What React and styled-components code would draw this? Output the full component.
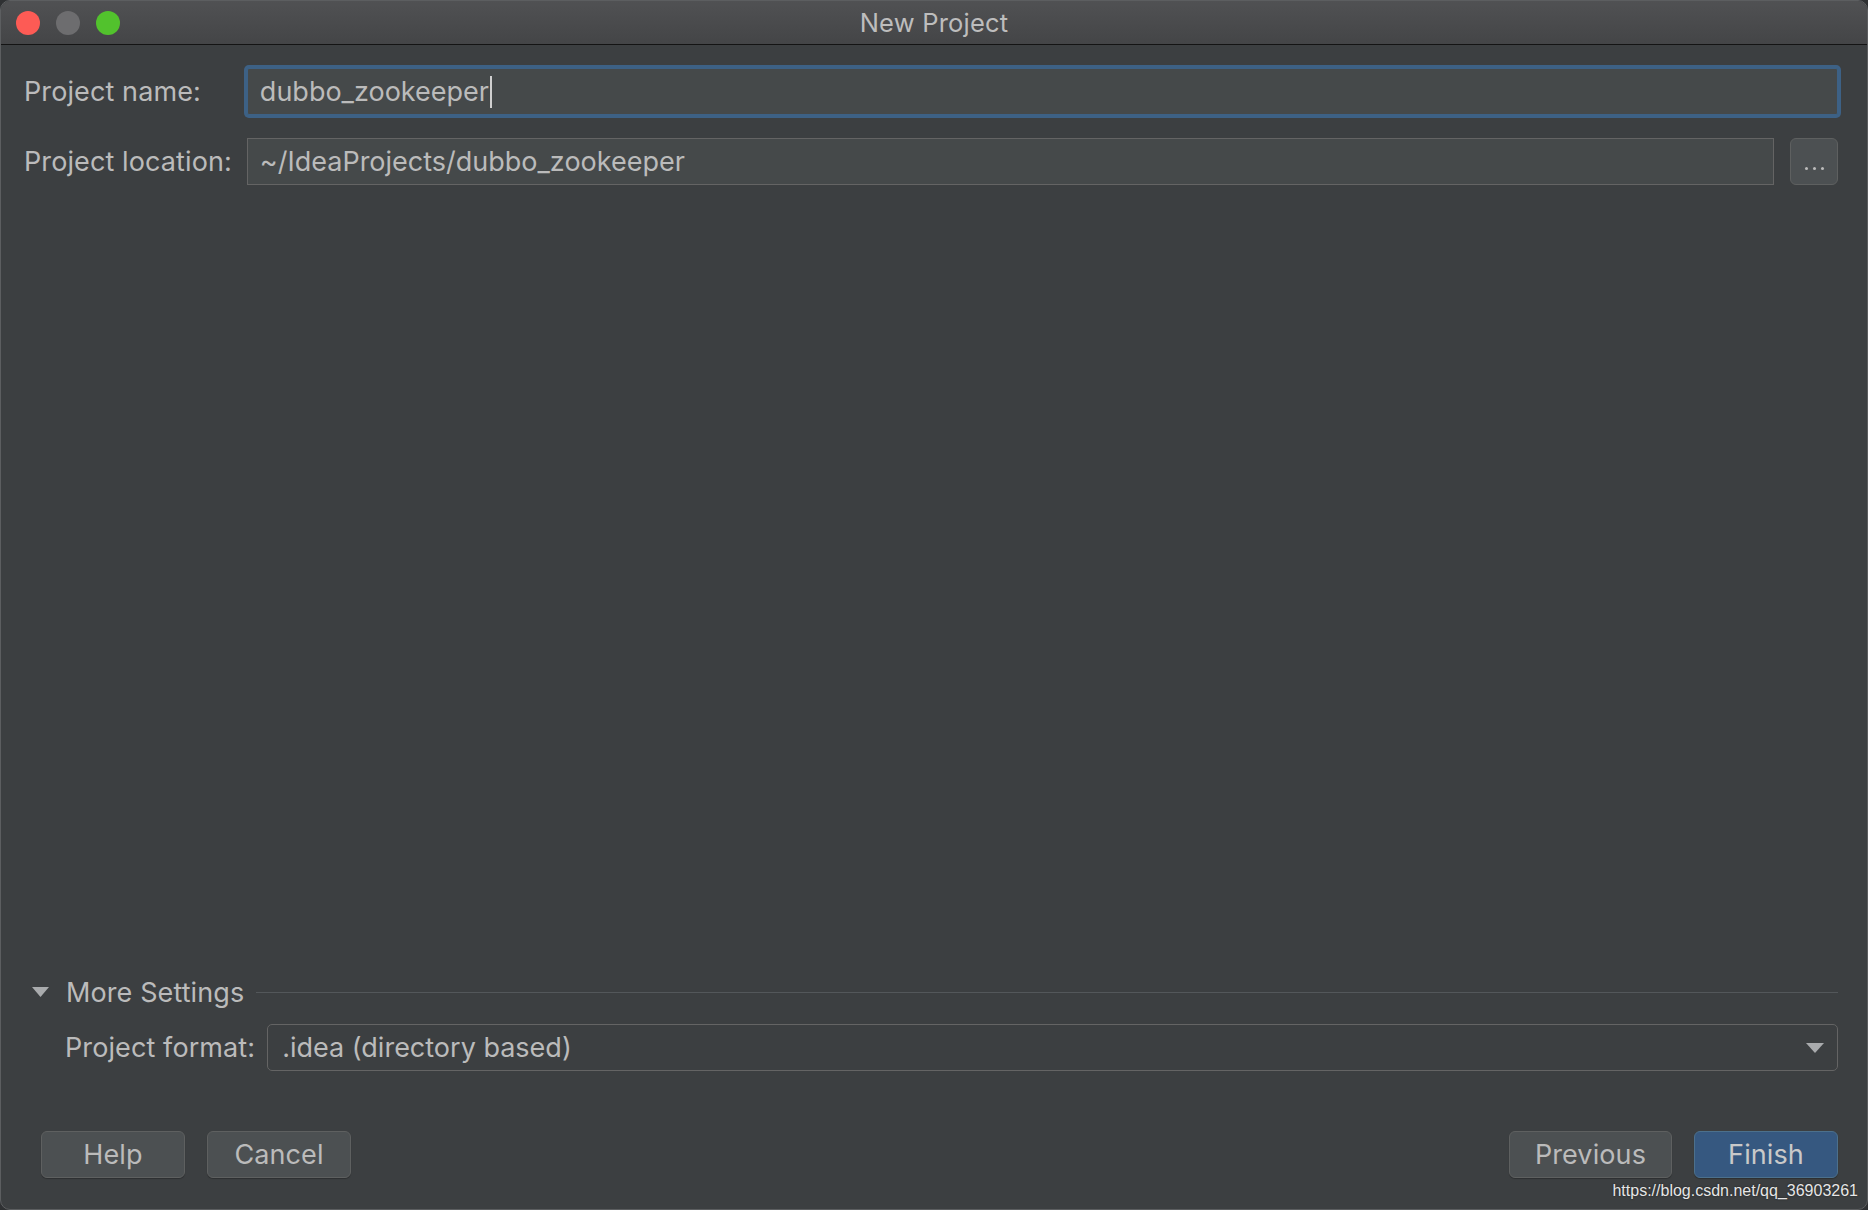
import React from "react";
import styled, { createGlobalStyle } from "styled-components";

const Global = createGlobalStyle`
  html, body { margin: 0; padding: 0; background: #2f3133; }
  body { font-family: Inter, "Noto Sans", sans-serif; }
  * { box-sizing: border-box; }
`;

const Window = styled.div`
  position: relative;
  width: 1868px;
  height: 1210px;
  display: flex;
  flex-direction: column;
  background: #3c3f41;
  border: 1px solid #5c5e60;
  border-radius: 10px;
  overflow: hidden;
  color: #bbbbbb;
`;

const TitleBar = styled.div`
  height: 44px;
  flex: none;
  display: grid;
  grid-template-columns: 1fr auto 1fr;
  align-items: center;
  background: linear-gradient(#505153, #444547);
  border-bottom: 1px solid #141414;
`;

const Lights = styled.div`
  display: flex;
  gap: 16px;
  padding-left: 15px;
`;

const Light = styled.span`
  width: 24px;
  height: 24px;
  border-radius: 50%;
  background: ${(p) => p.$color};
`;

const Title = styled.div`
  font-size: 25.5px;
  color: #bdbdbd;
  letter-spacing: 0.2px;
`;

const Body = styled.div`
  flex: 1;
  display: flex;
  flex-direction: column;
  padding: 23px 29px 31px 23px;
`;

const Form = styled.div`
  display: grid;
  grid-template-columns: auto 1fr;
  column-gap: 15px;
  row-gap: 23px;
  align-items: center;
`;

const Label = styled.div`
  font-size: 27px;
  letter-spacing: 0.1px;
  white-space: nowrap;
  color: #bbbbbb;
`;

const Field = styled.div`
  height: 47px;
  display: flex;
  align-items: center;
  padding-left: 12px;
  background: #45494a;
  font-size: 27px;
  color: #bbbbbb;
  border: 1px solid ${(p) => (p.$focused ? "#3d6185" : "#646464")};
  box-shadow: ${(p) => (p.$focused ? "0 0 0 3px #3d6185" : "none")};
  border-radius: ${(p) => (p.$focused ? "2px" : "0")};
  flex: 1;
  min-width: 0;
`;

const Caret = styled.span`
  display: inline-block;
  width: 2px;
  height: 32px;
  margin-left: 1px;
  background: #cfcfcf;
`;

const LocationRow = styled.div`
  display: flex;
  gap: 16px;
  align-items: center;
`;

const BrowseButton = styled.div`
  width: 48px;
  height: 47px;
  flex: none;
  display: flex;
  align-items: flex-end;
  justify-content: center;
  gap: 5px;
  padding-bottom: 14px;
  background: #4c5052;
  border: 1px solid #5e6060;
  border-radius: 6px;
`;

const Dot = styled.span`
  width: 3px;
  height: 3px;
  border-radius: 50%;
  background: #bbbbbb;
`;

const Spacer = styled.div`
  flex: 1;
`;

const SectionHeader = styled.div`
  height: 30px;
  display: flex;
  align-items: center;
  padding-left: 8px;
`;

const SectionTitle = styled.span`
  font-size: 27px;
  letter-spacing: 0.1px;
  color: #bbbbbb;
  margin-left: 17px;
  margin-right: 12px;
  white-space: nowrap;
`;

const Rule = styled.div`
  flex: 1;
  height: 1px;
  background: #53575a;
`;

const FormatRow = styled.div`
  margin-top: 17px;
  display: flex;
  align-items: center;
  gap: 12px;
  padding-left: 41px;
`;

const Combo = styled.div`
  flex: 1;
  height: 47px;
  display: flex;
  align-items: center;
  justify-content: space-between;
  padding: 0 13px 0 14px;
  border: 1px solid #646464;
  border-radius: 5px;
  background: #3c3f41;
  font-size: 27px;
  color: #bbbbbb;
`;

const ButtonRow = styled.div`
  margin-top: 60px;
  display: flex;
  justify-content: space-between;
  padding-left: 17px;
`;

const Group = styled.div`
  display: flex;
  gap: 22px;
`;

const Button = styled.div`
  height: 47px;
  min-width: 144px;
  padding: 0 25px;
  display: flex;
  align-items: center;
  justify-content: center;
  font-size: 27px;
  letter-spacing: 0.1px;
  color: ${(p) => (p.$primary ? "#c9c9c9" : "#bbbbbb")};
  background: ${(p) => (p.$primary ? "#365880" : "#4c5052")};
  border: 1px solid ${(p) => (p.$primary ? "#4c708c" : "#5e6060")};
  border-radius: 6px;
  box-shadow: 0 1px 1px rgba(0, 0, 0, 0.25);
`;

const Watermark = styled.div`
  position: absolute;
  right: 9px;
  bottom: 9px;
  font-family: "Liberation Sans", Arial, sans-serif;
  font-size: 16px;
  color: #e6e6e6;
  text-shadow: 0 0 2px rgba(0, 0, 0, 0.6);
`;

const Triangle = ({ w, h, color }) => (
  <svg width={w} height={h} viewBox={`0 0 ${w} ${h}`}>
    <polygon points={`0,0 ${w},0 ${w / 2},${h}`} fill={color} />
  </svg>
);

export default function App() {
  return (
    <>
      <Global />
      <Window>
        <TitleBar>
          <Lights>
            <Light $color="#fd5b55" />
            <Light $color="#6d6d6f" />
            <Light $color="#52c22d" />
          </Lights>
          <Title>New Project</Title>
          <div />
        </TitleBar>
        <Body>
          <Form>
            <Label>Project name:</Label>
            <Field $focused>
              dubbo_zookeeper
              <Caret />
            </Field>
            <Label>Project location:</Label>
            <LocationRow>
              <Field>~/IdeaProjects/dubbo_zookeeper</Field>
              <BrowseButton>
                <Dot />
                <Dot />
                <Dot />
              </BrowseButton>
            </LocationRow>
          </Form>
          <Spacer />
          <SectionHeader>
            <Triangle w={17} h={10} color="#a9abad" />
            <SectionTitle>More Settings</SectionTitle>
            <Rule />
          </SectionHeader>
          <FormatRow>
            <Label>Project format:</Label>
            <Combo>
              <span>.idea (directory based)</span>
              <Triangle w={18} h={10} color="#a9abad" />
            </Combo>
          </FormatRow>
          <ButtonRow>
            <Group>
              <Button>Help</Button>
              <Button>Cancel</Button>
            </Group>
            <Group>
              <Button>Previous</Button>
              <Button $primary>Finish</Button>
            </Group>
          </ButtonRow>
        </Body>
        <Watermark>https://blog.csdn.net/qq_36903261</Watermark>
      </Window>
    </>
  );
}
